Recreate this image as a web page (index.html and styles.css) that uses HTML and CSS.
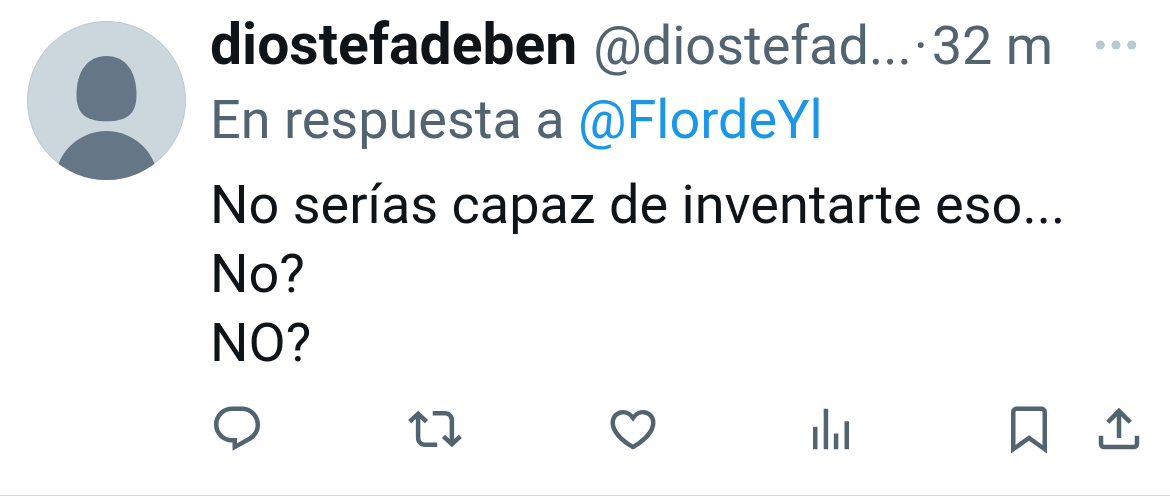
FILE: index.html
```
<!DOCTYPE html>
<html lang="es">

<head>
  <meta charset="UTF-8">
  <title>diostefadeben</title>
  <link rel="stylesheet" href="styles.css">
</head>

<body>
  <article class="tweet">
    <svg class="avatar" viewBox="0 0 159 159" role="img" aria-label="diostefadeben">
      <clipPath id="round"><circle cx="79.5" cy="79.5" r="79.5" /></clipPath>
      <g clip-path="url(#round)">
        <rect width="159" height="159" fill="#ccd6dd" />
        <circle cx="79.5" cy="79.5" r="79" fill="none" stroke="#bfcad1" />
        <path fill="#657786" d="M79.5 35C99 35 109.5 51 109.5 74C109.5 93 100 100.3 79.5 100.3S49.5 93 49.5 74C49.5 51 60 35 79.5 35z" />
        <circle cx="79.5" cy="161.5" r="51.5" fill="#657786" />
      </g>
    </svg>

    <div class="content">
      <header class="header">
        <a class="name" href="#">diostefadeben</a>
        <a class="handle" href="#">@diostefad...</a>
        <span class="dot">·</span>
        <a class="time" href="#">32 m</a>
        <button class="more" aria-label="Más opciones">
          <svg viewBox="0 0 24 24">
            <circle cx="5" cy="12" r="2" />
            <circle cx="12" cy="12" r="2" />
            <circle cx="19" cy="12" r="2" />
          </svg>
        </button>
      </header>

      <div class="reply">En respuesta a <a href="#">@FlordeYl</a></div>

      <p class="text">No serías capaz de inventarte eso...<br>No?<br>NO?</p>

      <div class="actions">
        <div class="action">
          <button aria-label="Responder">
            <svg viewBox="0 0 24 24"><path d="M1.751 10c0-4.42 3.584-8 8.005-8h4.366c4.49 0 8.129 3.64 8.129 8.13 0 2.96-1.607 5.68-4.196 7.11l-8.054 4.46v-3.69h-.067c-4.49.1-8.183-3.51-8.183-8.01zm8.005-6c-3.317 0-6.005 2.69-6.005 6 0 3.37 2.77 6.08 6.138 6.01l.351-.01h1.761v2.3l5.087-2.81c1.951-1.08 3.163-3.13 3.163-5.36 0-3.39-2.744-6.13-6.129-6.13H9.756z" /></svg>
          </button>
        </div>
        <div class="action">
          <button aria-label="Repostear">
            <svg viewBox="0 0 24 24"><path d="M4.5 3.88l4.432 4.14-1.364 1.46L5.5 7.55V16c0 1.1.896 2 2 2H13v2H7.5c-2.209 0-4-1.79-4-4V7.55L1.432 9.48.068 8.02 4.5 3.88zM16.5 6H11V4h5.5c2.209 0 4 1.79 4 4v8.45l2.068-1.93 1.364 1.46-4.432 4.14-4.432-4.14 1.364-1.46 2.068 1.93V8c0-1.1-.896-2-2-2z" /></svg>
          </button>
        </div>
        <div class="action">
          <button aria-label="Me gusta">
            <svg viewBox="0 0 24 24"><path d="M16.697 5.5c-1.222-.06-2.679.51-3.89 2.16l-.805 1.09-.806-1.09C9.984 6.01 8.526 5.44 7.304 5.5c-1.243.07-2.349.78-2.91 1.91-.552 1.12-.633 2.78.479 4.82 1.074 1.97 3.257 4.27 7.129 6.61 3.87-2.34 6.052-4.64 7.126-6.61 1.111-2.04 1.03-3.7.477-4.82-.561-1.13-1.666-1.84-2.908-1.91zm4.187 7.69c-1.351 2.48-4.001 5.12-8.379 7.67l-.503.3-.504-.3c-4.379-2.55-7.029-5.19-8.382-7.67-1.36-2.5-1.41-4.86-.514-6.67.887-1.79 2.647-2.91 4.601-3.01 1.651-.09 3.368.56 4.798 2.01 1.429-1.45 3.146-2.1 4.796-2.01 1.954.1 3.714 1.22 4.601 3.01.896 1.81.846 4.17-.514 6.67z" /></svg>
          </button>
        </div>
        <div class="action">
          <button aria-label="Ver estadísticas">
            <svg viewBox="0 0 24 24"><path d="M8.75 21V3h2v18h-2zM18 21V8.5h2V21h-2zM4 21l.004-10h2L6 21H4zm9.248 0v-7h2v7h-2z" /></svg>
          </button>
        </div>
        <button class="bookmark" aria-label="Guardar">
          <svg viewBox="0 0 24 24"><path d="M4 4.5C4 3.12 5.119 2 6.5 2h11C18.881 2 20 3.12 20 4.5v18.44l-8-5.71-8 5.71V4.5zM6.5 4c-.276 0-.5.22-.5.5v14.56l6-4.29 6 4.29V4.5c0-.28-.224-.5-.5-.5h-11z" /></svg>
        </button>
        <button aria-label="Compartir">
          <svg viewBox="0 0 24 24"><path d="M12 2.59l5.7 5.7-1.41 1.42L13 6.41V16h-2V6.41l-3.3 3.3-1.41-1.42L12 2.59zM21 15l-.02 3.51c0 1.38-1.12 2.49-2.5 2.49H5.5C4.11 21 3 19.88 3 18.5V15h2v3.5c0 .28.22.5.5.5h12.98c.28 0 .5-.22.5-.5L19 15h2z" /></svg>
        </button>
      </div>
    </div>
  </article>
</body>

</html>
```
FILE: styles.css
```
body {
  margin: 0;
  background: #fff;
  color: #0f1419;
  font-family: Roboto, "Liberation Sans", sans-serif;
  font-size: 54px;
  line-height: 69px;
}

a {
  color: inherit;
  text-decoration: none;
}

button {
  display: block;
  padding: 0;
  border: none;
  background: none;
  color: #536471;
  cursor: pointer;
}

button svg {
  display: block;
  width: 54px;
  height: 54px;
  fill: currentColor;
}

.tweet {
  display: flex;
  gap: 24px;
  padding: 10px 24px 39px 27px;
  border-bottom: 1px solid #cfd9de;
}

.avatar {
  flex: none;
  width: 159px;
  height: 159px;
  margin-top: 11px;
}

.content {
  flex: 1;
  min-width: 0;
}

.header {
  display: flex;
  align-items: baseline;
  white-space: nowrap;
  color: #536471;
}

.name {
  margin-right: 16px;
  color: #0f1419;
  font-size: 57px;
  font-weight: bold;
}

.dot {
  margin: 0 4px 0 2px;
}

.more {
  align-self: center;
  margin-left: auto;
  padding: 0 3px;
  color: #b9cad3;
}

.reply {
  margin-top: 5px;
  color: #536471;
}

.reply a {
  color: #1c96e6;
}

.text {
  margin: 16px 0 25px;
}

.actions {
  display: flex;
}

.action {
  flex: 1;
}

.bookmark {
  margin-right: 36px;
}
```
